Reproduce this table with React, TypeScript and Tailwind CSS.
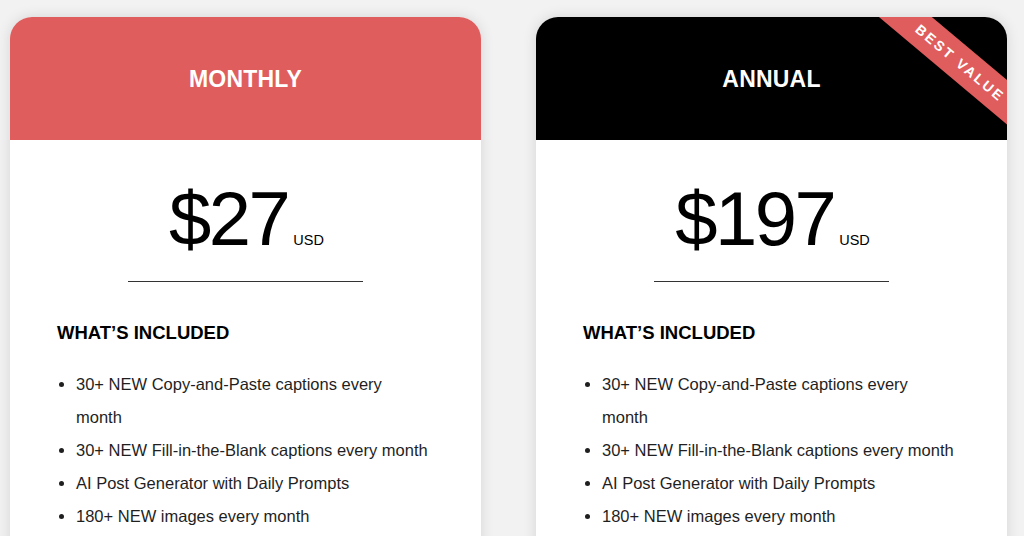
const features = [
  '30+ NEW Copy-and-Paste captions every month',
  '30+ NEW Fill-in-the-Blank captions every month',
  'AI Post Generator with Daily Prompts',
  '180+ NEW images every month',
]

function PlanCard({
  title,
  price,
  headerClass,
  ribbon,
}: {
  title: string
  price: string
  headerClass: string
  ribbon?: boolean
}) {
  return (
    <div className="relative w-[471px] h-[560px] shrink-0 overflow-hidden rounded-[22px] bg-white shadow-[0_0_14px_rgba(0,0,0,0.12)]">
      <div
        className={`h-[123px] flex items-center justify-center ${headerClass}`}
      >
        <h2 className="text-[23px] font-bold text-white tracking-[0.2px] mt-[2px]">
          {title}
        </h2>
      </div>
      {ribbon && (
        <div className="absolute top-[28px] right-[-52px] w-[200px] h-[34px] rotate-[40deg] bg-[#e05d5d] flex items-center justify-center">
          <span className="text-[14px] font-bold text-white tracking-[0.17em] pl-[3px]">
            BEST VALUE
          </span>
        </div>
      )}
      <div className="pt-[41px] flex items-baseline justify-center text-black">
        <span className="text-[76px] leading-none tracking-[-2.5px] ml-[2px]">
          {price}
        </span>
        <span className="text-[14.5px] ml-[5px]">USD</span>
      </div>
      <div className="mx-auto mt-[24px] w-[235px] h-px bg-[#333]" />
      <div className="pl-[47px] pr-[51px]">
        <h3 className="mt-[39px] text-[18.5px] leading-[24px] font-bold text-black">
          WHAT’S INCLUDED
        </h3>
        <ul className="mt-[22.5px] list-disc pl-[19px] text-[16.5px] leading-[33px] text-[#1f1f1f]">
          {features.map((f) => (
            <li key={f}>{f}</li>
          ))}
        </ul>
      </div>
    </div>
  )
}

export default function App() {
  return (
    <div
      className="w-[1024px] h-[536px] overflow-hidden bg-[#f2f2f2] flex gap-[55px] pl-[10px] pt-[17px]"
      style={{ fontFamily: '"Liberation Sans", Arial, sans-serif' }}
    >
      <PlanCard title="MONTHLY" price="$27" headerClass="bg-[#e05d5d]" />
      <PlanCard title="ANNUAL" price="$197" headerClass="bg-black" ribbon />
    </div>
  )
}
